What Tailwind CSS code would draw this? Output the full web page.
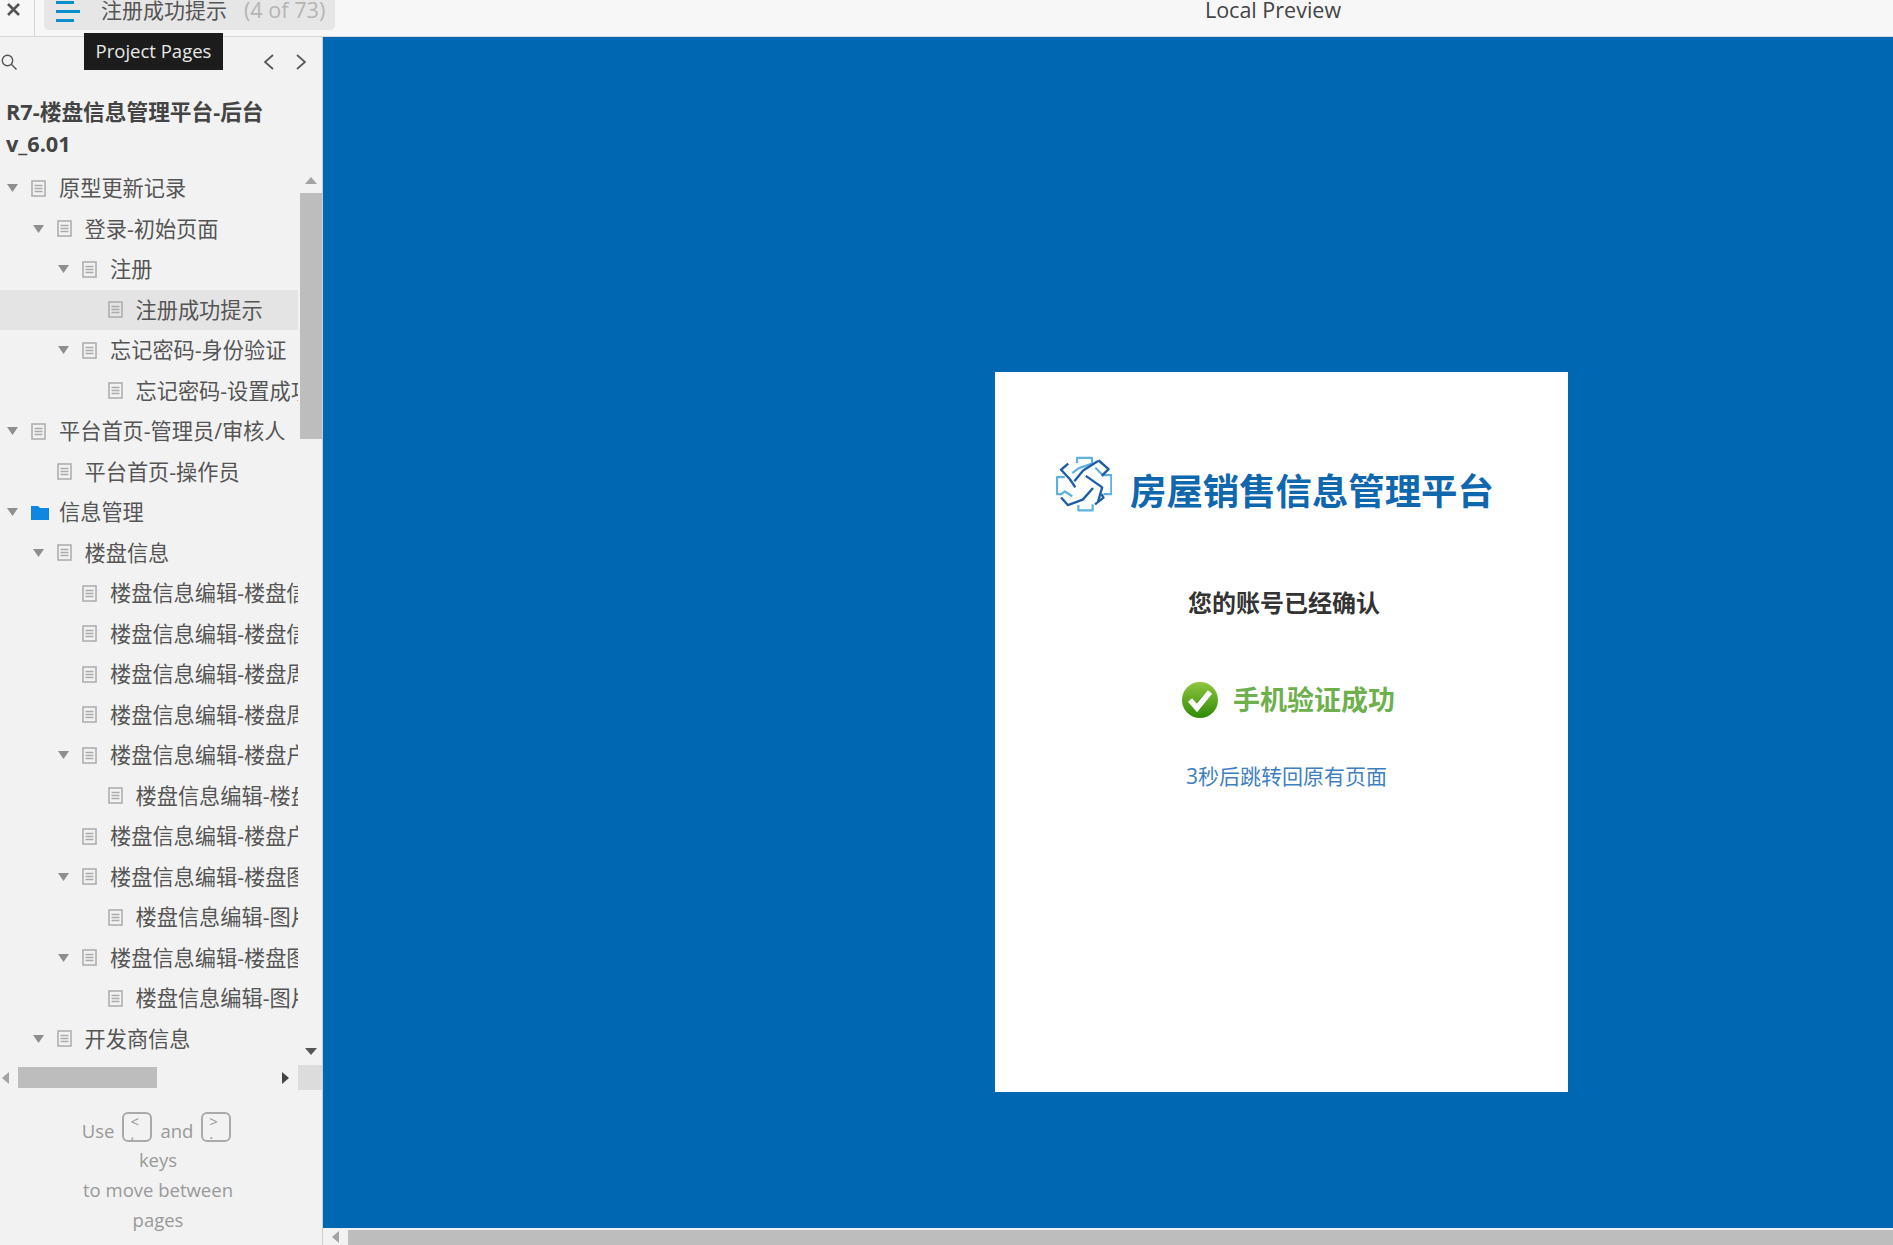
<!DOCTYPE html>
<html lang="zh-CN">
<head>
    <meta charset="UTF-8">
    <title>注册成功提示</title>
    <script src="https://cdn.jsdelivr.net/npm/@tailwindcss/browser@4"></script>
</head>
<body class="font-['Open_Sans','Noto_Sans_CJK_SC',sans-serif] overflow-hidden">
<div class="relative flex flex-col w-[1893px] h-[1245px] bg-[#f2f2f2]">
    <!-- top bar -->
    <header class="flex h-[37px] shrink-0 bg-[#f7f7f7] border-b border-[#d6d6d6]">
        <div class="flex w-[35px] h-full border-r border-[#d6d6d6] pt-[3px] pl-[7px]">
            <svg class="w-[13px] h-[13px]" viewBox="0 0 13 13" fill="none" stroke="#555" stroke-width="2.6"><path d="M1 1l11 11M12 1L1 12"/></svg>
        </div>
        <div class="flex ml-[9px] w-[291px] h-[30px] bg-[#e6e6e6] rounded-b-[5px]">
            <div class="flex flex-col gap-[6px] ml-[12px] w-[24px] pt-[1px]">
                <div class="h-[3px] w-[18px] bg-[#0a8fcb]"></div>
                <div class="h-[3px] w-[24px] bg-[#0a8fcb]"></div>
                <div class="h-[3px] w-[18px] bg-[#0a8fcb]"></div>
            </div>
            <span class="ml-[21px] text-[21px] leading-[20px] text-[#555] whitespace-nowrap">注册成功提示</span>
            <span class="ml-[17px] text-[21.6px] leading-[20px] text-[#b5b5b5] whitespace-nowrap">(4 of 73)</span>
        </div>
        <div class="flex-1 pl-[318px] text-center text-[21.5px] leading-[20px] text-[#444]">Local Preview</div>
    </header>

    <!-- tooltip -->
    <div class="absolute left-[84px] top-[33px] w-[139px] h-[37px] flex items-center justify-center pb-[2px] bg-[#1c1c1c] text-[#e8e8e8] text-[18.5px]">Project Pages</div>

    <div class="flex flex-1 min-h-0">
        <!-- left sidebar -->
        <aside class="flex flex-col w-[323px] shrink-0 border-r border-[#cfcfcf]">
            <div class="flex items-center justify-between h-[50px] pb-[1px] pl-[1px] pr-[15px] shrink-0">
                <svg class="w-[16px] h-[16px]" viewBox="0 0 16 16" fill="none" stroke="#555" stroke-width="1.4"><circle cx="6.5" cy="6.5" r="5.2"/><path d="M10.3 10.3L15.5 15.5"/></svg>
                <div class="flex gap-[20px]">
                    <svg class="w-[12px] h-[16px]" viewBox="0 0 12 16" fill="none" stroke="#555" stroke-width="1.7"><path d="M10 1L2 8l8 7"/></svg>
                    <svg class="w-[12px] h-[16px]" viewBox="0 0 12 16" fill="none" stroke="#555" stroke-width="1.7"><path d="M2 1l8 7-8 7"/></svg>
                </div>
            </div>
            <div class="pl-[6px] pt-[9px] pb-[8px] text-[21.7px] leading-[32px] font-bold text-[#444] shrink-0">R7-楼盘信息管理平台-后台<br>v_6.01</div>

            <div class="flex h-[897px] shrink-0">
                <ul id="tree" class="w-[298px] overflow-hidden"></ul>
                <div class="flex flex-col w-[22px] ml-[2px]">
                    <div class="flex items-center justify-center h-[25px]">
                        <svg class="w-[12px] h-[7px]" viewBox="0 0 12 7" fill="#a3a3a3"><path d="M6 0l6 7H0z"/></svg>
                    </div>
                    <div class="h-[246px] bg-[#bdbdbd]"></div>
                    <div class="flex-1"></div>
                    <div class="flex items-center justify-center h-[28px]">
                        <svg class="w-[12px] h-[7px]" viewBox="0 0 12 7" fill="#555"><path d="M0 0h12L6 7z"/></svg>
                    </div>
                </div>
            </div>

            <div class="flex items-center h-[25px] shrink-0">
                <div class="flex items-center w-[18px] h-[21px] pl-[2px]">
                    <svg class="w-[7px] h-[12px]" viewBox="0 0 7 12" fill="#a3a3a3"><path d="M7 0v12L0 6z"/></svg>
                </div>
                <div class="w-[139px] h-[21px] bg-[#bdbdbd]"></div>
                <div class="flex-1 flex justify-end pr-[9px]">
                    <svg class="w-[7px] h-[12px]" viewBox="0 0 7 12" fill="#444"><path d="M0 0v12l7-6z"/></svg>
                </div>
                <div class="w-[24px] h-full bg-[#dcdcdc]"></div>
            </div>

            <div class="w-[316px] pt-[26px] text-center text-[18.5px] leading-[30px] text-[#999]">
                <div class="flex justify-center items-center gap-[8px] h-[30px] pr-[3px]">
                    <span>Use</span>
                    <kbd class="flex flex-col w-[30px] h-[30px] mb-[9px] pl-[6px] border-2 border-[#aaa] rounded-[6px] text-[15px] leading-[12px] text-left font-['Open_Sans',sans-serif] pt-[1px]"><span>&lt;</span><span>,</span></kbd>
                    <span>and</span>
                    <kbd class="flex flex-col w-[30px] h-[30px] mb-[9px] pl-[6px] border-2 border-[#aaa] rounded-[6px] text-[15px] leading-[12px] text-left font-['Open_Sans',sans-serif] pt-[1px]"><span>&gt;</span><span>.</span></kbd>
                </div>
                <div class="-mt-[1px]">keys</div>
                <div>to move between</div>
                <div>pages</div>
            </div>
        </aside>

        <!-- preview -->
        <main class="flex flex-col flex-1 min-w-0">
            <div class="flex-1 bg-[#0068b3] pl-[672px] pt-[335px]">
                <section class="w-[573px] h-[720px] bg-white">
                    <div class="flex items-start pl-[61px] pt-[84px]">
                        <svg class="w-[56px] h-[56px]" viewBox="0 0 165 160" fill="none" stroke-width="6.5" stroke-linejoin="round">
                            <g stroke="#5fb2e0">
                                <path d="M62 18V3h44v17L66 34 48 48"/>
                                <path d="M26 60H3v50h13l10-8 22 14"/>
                                <path d="M116 32l22 22h25v56h-23"/>
                                <path d="M66 142v16h42v-18"/>
                            </g>
                            <g stroke="#1d5fa6" stroke-width="7">
                                <path d="M36 20L15 38l26 28 16 24"/>
                                <path d="M125 10l30 26-20 20"/>
                                <path d="M54 72L80 40l44-28"/>
                                <path d="M88 56l48 34-12 42"/>
                                <path d="M115 140l25-20-6-10"/>
                                <path d="M15 120l20 22 44-16 30-34"/>
                            </g>
                        </svg>
                        <h1 class="ml-[18px] mt-[11px] text-[36.4px] leading-[48px] font-bold text-[#0f68ae] whitespace-nowrap">房屋销售信息管理平台</h1>
                    </div>
                    <p class="mt-[72px] ml-[193px] text-[24px] leading-[32px] font-bold text-[#333] whitespace-nowrap">您的账号已经确认</p>
                    <div class="flex items-center ml-[187px] mt-[63px]">
                        <svg class="w-[36px] h-[36px]" viewBox="0 0 36 36">
                            <defs><linearGradient id="ok" x1="0" y1="0" x2="0" y2="1"><stop offset="0" stop-color="#8fc63f"/><stop offset="1" stop-color="#2e8a06"/></linearGradient></defs>
                            <circle cx="18" cy="18" r="18" fill="url(#ok)"/>
                            <path d="M8 18l7 8L28 10" fill="none" stroke="#fff" stroke-width="5.5"/>
                        </svg>
                        <span class="ml-[15px] text-[27px] leading-[36px] font-bold text-[#6fb04e] whitespace-nowrap">手机验证成功</span>
                    </div>
                    <p class="mt-[43px] ml-[191px] text-[21px] leading-[30px] text-[#3f7fbf] whitespace-nowrap">3秒后跳转回原有页面</p>
                </section>
            </div>
            <div class="flex items-center h-[17px] shrink-0 bg-[#f2f2f2]">
                <div class="flex justify-center w-[25px]">
                    <svg class="w-[7px] h-[12px]" viewBox="0 0 7 12" fill="#a3a3a3"><path d="M7 0v12L0 6z"/></svg>
                </div>
                <div class="flex-1 h-[15px] mt-[2px] bg-[#bdbdbd]"></div>
            </div>
        </main>
    </div>
</div>

<script>
    const pages = [
        [0, 1, 'page', '原型更新记录'],
        [1, 1, 'page', '登录-初始页面'],
        [2, 1, 'page', '注册'],
        [3, 0, 'page', '注册成功提示', true],
        [2, 1, 'page', '忘记密码-身份验证'],
        [3, 0, 'page', '忘记密码-设置成功'],
        [0, 1, 'page', '平台首页-管理员/审核人'],
        [1, 0, 'page', '平台首页-操作员'],
        [0, 1, 'folder', '信息管理'],
        [1, 1, 'page', '楼盘信息'],
        [2, 0, 'page', '楼盘信息编辑-楼盘信息'],
        [2, 0, 'page', '楼盘信息编辑-楼盘信息'],
        [2, 0, 'page', '楼盘信息编辑-楼盘周边'],
        [2, 0, 'page', '楼盘信息编辑-楼盘周边'],
        [2, 1, 'page', '楼盘信息编辑-楼盘户型'],
        [3, 0, 'page', '楼盘信息编辑-楼盘户型'],
        [2, 0, 'page', '楼盘信息编辑-楼盘户型'],
        [2, 1, 'page', '楼盘信息编辑-楼盘图片'],
        [3, 0, 'page', '楼盘信息编辑-图片上传'],
        [2, 1, 'page', '楼盘信息编辑-楼盘图片'],
        [3, 0, 'page', '楼盘信息编辑-图片上传'],
        [1, 1, 'page', '开发商信息'],
    ];

    const arrow = '<svg class="w-[11px] h-[8px]" viewBox="0 0 11 8" fill="#8f8f8f"><path d="M0 0h11L5.500 8z"/></svg>';
    const pageIcon = '<svg class="w-[15px] h-[17px]" viewBox="0 0 15 17" fill="none" stroke="#ababab" stroke-width="1.500"><rect x="1" y="1" width="13" height="15"/><path d="M3.500 5.500h8M3.500 8.500h8M3.500 11.500h8"/></svg>';
    const folderIcon = '<svg class="w-[18px] h-[15px]" viewBox="0 0 18 15" fill="#0f86e0"><path d="M0 1h7l2 2h9v12H0z"/></svg>';

    const tree = document.getElementById('tree');
    pages.forEach(([level, open, kind, name, selected]) => {
        const row = document.createElement('li');
        row.className = `flex items-center h-[40.5px] whitespace-nowrap text-[21.2px] text-[#555] ${selected ? 'bg-[#e4e4e4]' : ''}`;
        row.style.paddingLeft = (7 + level * 25.5) + 'px';
        row.innerHTML = `
            <span class="flex w-[24px] shrink-0">${open ? arrow : ''}</span>
            <span class="flex w-[28px] shrink-0">${kind === 'folder' ? folderIcon : pageIcon}</span>
            <span>${name}</span>
        `;
        tree.appendChild(row);
    });
</script>
</body>
</html>
